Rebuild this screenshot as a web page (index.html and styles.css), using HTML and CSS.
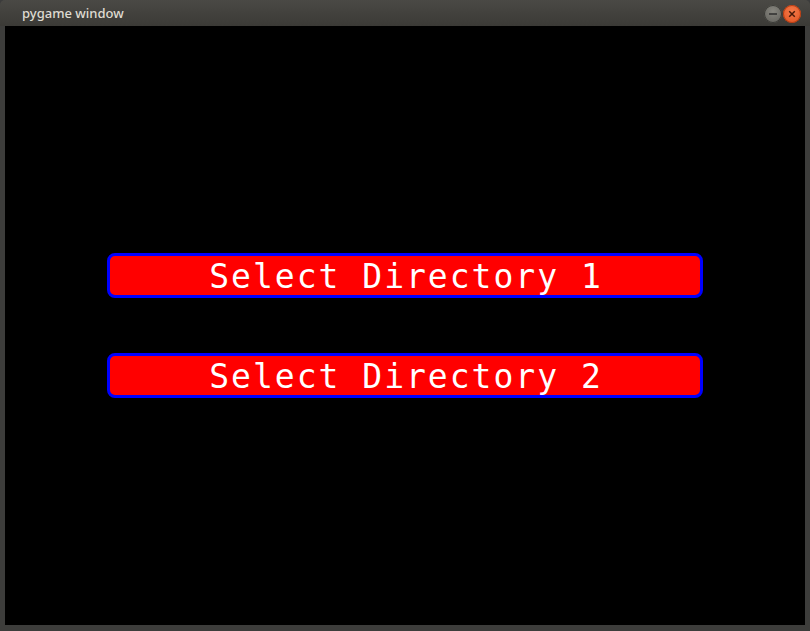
FILE: index.html
```html
<!DOCTYPE html>
<html>
<head>
<meta charset="utf-8">
<link rel="stylesheet" href="styles.css">
</head>
<body>
<div class="window">
  <div class="titlebar">
    <span class="title">pygame window</span>
    <div class="controls">
      <span class="ctl min"><svg width="18" height="18" viewBox="0 0 18 18"><line x1="5" y1="9" x2="13" y2="9" stroke="#2e2e2e" stroke-width="1.6"/></svg></span>
      <span class="ctl close"><svg width="18" height="18" viewBox="0 0 18 18"><path d="M6.2 6.2 L11.8 11.8 M11.8 6.2 L6.2 11.8" stroke="#4a1a08" stroke-width="1.5"/></svg></span>
    </div>
  </div>
  <div class="canvas">
    <button class="btn">Select Directory 1</button>
    <button class="btn">Select Directory 2</button>
  </div>
</div>
</body>
</html>
```
FILE: styles.css
```css
html, body {
  margin: 0;
  padding: 0;
  background: #3c3c3c;
}
.window {
  width: 810px;
  height: 631px;
  display: flex;
  flex-direction: column;
  background: #3d3d3b;
  border-radius: 5px 5px 0 0;
  overflow: hidden;
}
.titlebar {
  height: 26px;
  flex: none;
  display: flex;
  align-items: center;
  justify-content: space-between;
  background: linear-gradient(#4a4945, #3b3a36);
  padding: 0 9px 0 22px;
}
.title {
  font-family: "Noto Sans", "DejaVu Sans", sans-serif;
  font-size: 13px;
  font-weight: 500;
  color: #dfdbd2;
  margin-top: -1px;
}
.controls {
  display: flex;
  gap: 1px;
  margin-top: 1px;
}
.ctl {
  width: 18px;
  height: 18px;
  border-radius: 50%;
  display: flex;
}
.min {
  background: radial-gradient(circle at 50% 35%, #87867f, #5e5d58);
  box-shadow: inset 0 0 0 1px #3a3a36;
}
.close {
  background: radial-gradient(circle at 50% 35%, #f47a4a, #e0501e);
  box-shadow: inset 0 0 0 1px #b43c12;
}
.canvas {
  flex: 1;
  margin: 0 5px 6px 5px;
  background: #000;
  display: flex;
  flex-direction: column;
  align-items: flex-start;
  padding: 227px 0 0 102px;
  gap: 55px;
}
.btn {
  width: 596px;
  height: 45px;
  box-sizing: border-box;
  background: #ff0000;
  border: 3px solid #0000ff;
  border-radius: 8px;
  color: #fff;
  font-family: "DejaVu Sans Mono", monospace;
  font-size: 33px;
  letter-spacing: 2px;
  padding: 2px 0 0 2px;
  line-height: 38px;
  text-align: center;
}
```
